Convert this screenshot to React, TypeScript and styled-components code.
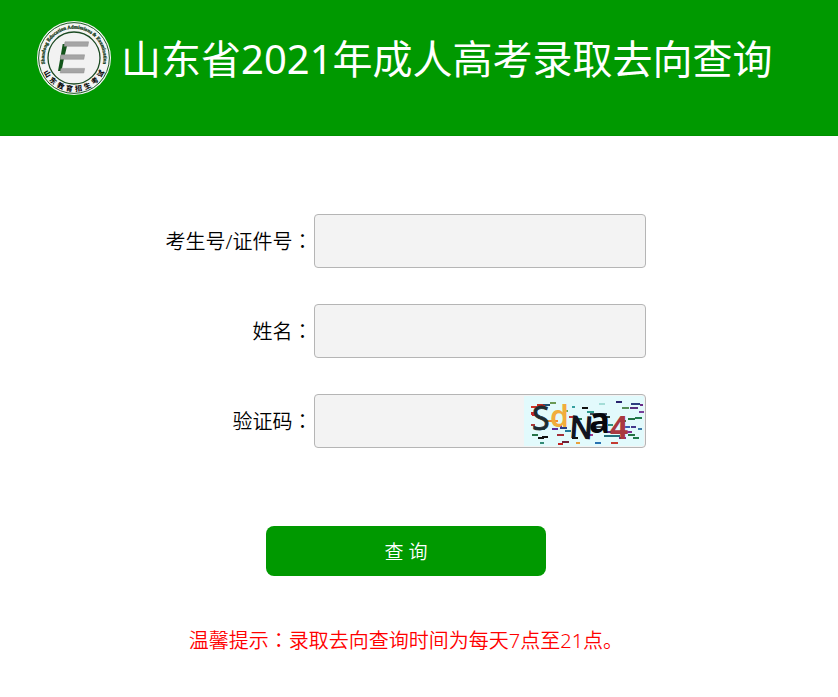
import React from "react";
import styled, { createGlobalStyle } from "styled-components";

const GREEN = "#009900";

const GlobalStyle = createGlobalStyle`
  * { box-sizing: border-box; }
  body {
    margin: 0;
    background: #fff;
    color: #000;
    font-family: "Noto Sans", "Noto Sans CJK SC", sans-serif;
    font-size: 20px;
    font-weight: 350;
  }
`;

const Header = styled.header`
  display: flex;
  align-items: flex-start;
  gap: 9px;
  height: 136px;
  padding: 20px 36px;
  background: ${GREEN};
  border-bottom: 1px solid #009000;
`;

const Logo = styled.svg`
  flex: none;
  width: 76px;
  height: 76px;
`;

const Title = styled.h1`
  margin: 0;
  color: #fff;
  font-size: 40px;
  font-weight: 400;
  line-height: 78px;
  white-space: nowrap;
`;

const Main = styled.main`
  padding: 78px 26px 40px 0;
`;

const Form = styled.form`
  display: flex;
  flex-direction: column;
  align-items: center;
`;

const Fields = styled.div`
  display: grid;
  grid-template-columns: max-content 332px;
  column-gap: 2px;
  row-gap: 36px;
  align-items: center;
`;

const Label = styled.label`
  text-align: right;
  line-height: 48px;
`;

const Colon = styled.span`
  font-family: "Noto Sans CJK TC", sans-serif;
`;

const FieldBox = styled.div`
  display: flex;
  align-items: center;
  height: 54px;
  padding: 1px;
  overflow: hidden;
  background: #f3f3f3;
  border: 1px solid #b5b5b5;
  border-radius: 4px;
`;

const Input = styled.input`
  flex: 1;
  min-width: 0;
  height: 100%;
  padding: 0 10px;
  border: 0;
  outline: 0;
  background: transparent;
  font: inherit;
`;

const CaptchaImage = styled.svg`
  flex: none;
  width: 120px;
  height: 50px;
`;

const Submit = styled.button`
  width: 280px;
  height: 50px;
  margin-top: 78px;
  padding: 0;
  border: 0;
  border-radius: 8px;
  background: ${GREEN};
  color: #fff;
  font: inherit;
  font-size: 19px;
  cursor: pointer;
`;

const Notice = styled.p`
  margin: 48px 0 0;
  color: #f00;
  line-height: 32px;
  text-align: center;
`;

function Emblem() {
  return (
    <Logo viewBox="0 0 76 76" role="img" aria-label="山东教育招生考试">
      <defs>
        <path id="ring-top" d="M15.4 57.3 A29.6 29.6 0 1 1 60.6 57.3" />
      </defs>
      <circle cx="38" cy="38" r="37" fill="#f4f4f4" />
      <circle cx="38" cy="38" r="35.4" fill="none" stroke="#1b5a22" strokeWidth="1" />
      <circle cx="38" cy="38" r="26" fill="#f2f2f2" stroke="#1b4a22" strokeWidth="1.3" />
      <text fontFamily="Liberation Serif" fontSize="5" fontWeight="700" fill="#17401c" stroke="#17401c" strokeWidth="0.3">
        <textPath href="#ring-top" startOffset="50%" textAnchor="middle">
          Shandong Education Admissions &amp; Examination
        </textPath>
      </text>
      <g
        fontFamily="Noto Sans CJK SC"
        fontSize="7"
        fontWeight="900"
        fill="#111"
        textAnchor="middle"
      >
        {Array.from("山东教育招生考试").map((ch, i) => (
          <text key={i} x="38" y="71.4" transform={`rotate(${59.5 - i * 17} 38 38)`}>
            {ch}
          </text>
        ))}
      </g>
      <path d="M26.7 24H31.5L28.4 37H28.3L25.5 51H22L24.5 37z" fill="#12551a" />
      <path d="M29 21.8H52.6L51.8 26.3H28.2zM25 34.8H48.6L47.8 39.3H24.2zM25 48.4H48.6L47.8 53H24.2z" fill="#a5a5a5" stroke="#8c8c8c" strokeWidth="0.5" />
    </Logo>
  );
}

const dashes: [number, number, number, string][] = [
  [26, 8, 6, "#6a9a55"], [13, 10, 7, "#c22d20"], [19, 10, 7, "#214f70"],
  [7, 12, 6, "#d03325"], [92, 7, 6, "#29246e"], [107, 9, 9, "#2d3e80"],
  [98, 13, 7, "#548e58"], [106, 13, 8, "#57307e"], [116, 10, 3, "#6b2a85"],
  [58, 13, 6, "#111"], [39, 16, 5, "#59ac54"], [48, 12, 3, "#36a0a0"],
  [75, 9, 6, "#a4ddd7"], [63, 17, 7, "#2d9a8b"], [115, 17, 5, "#79409b"],
  [7, 19, 6, "#b92d42"], [104, 24, 7, "#247344"], [111, 23, 7, "#207a4b"],
  [94, 26, 8, "#247344"], [78, 22, 8, "#2b3b35"], [50, 24, 8, "#247755"],
  [24, 26, 5, "#7ac68e"], [7, 30, 4, "#a83938"], [16, 34, 5, "#1e7a43"],
  [33, 31, 5, "#72309a"], [36, 33, 7, "#273e88"], [28, 34, 6, "#59309a"],
  [99, 32, 7, "#385cad"], [107, 32, 5, "#45388d"], [100, 37, 8, "#7b318e"],
  [8, 40, 6, "#257448"], [18, 42, 6, "#111"], [14, 43, 6, "#111"],
  [33, 40, 7, "#a42e38"], [41, 36, 6, "#237a9b"], [48, 43, 6, "#111"],
  [61, 40, 8, "#a23a8b"], [82, 37, 8, "#5b2c83"], [80, 41, 16, "#236d7b"],
  [104, 40, 7, "#247344"], [109, 43, 6, "#207a4b"], [95, 43, 7, "#693092"],
  [38, 47, 7, "#6f2138"], [34, 49, 5, "#c02020"], [71, 48, 6, "#2872b1"],
  [87, 48, 7, "#c43b31"], [52, 48, 4, "#eaa03c"], [84, 30, 5, "#309080"],
  [45, 22, 4, "#b33"], [16, 48, 4, "#328c76"], [114, 34, 4, "#3c77a5"],
];

function Captcha() {
  return (
    <CaptchaImage viewBox="0 0 120 50" role="img" aria-label="验证码图片">
      <rect width="120" height="50" fill="#e2fafc" />
      {dashes.map(([x, y, w, color], i) => (
        <rect key={i} x={x} y={y - 2} width={w} height="2" fill={color} />
      ))}
      <path d="M7 17h6M8 19h4M15 10h6" stroke="#c32620" strokeWidth="2" />
      <path d="M66 18h17M68 31h14" stroke="#10131f" strokeWidth="1.5" />
      <path d="M22 25h12" stroke="#f08c32" strokeWidth="2" />
      <g fontFamily="Noto Sans">
        <text x="8" y="34" fontSize="32" fontWeight="400" fill="#1c2c32" stroke="#1c2c32" strokeWidth="0.8">S</text>
        <text x="26" y="31" fontSize="30" fontWeight="600" fill="#f2ad3c">d</text>
        <text x="46" y="42" fontSize="30" fontWeight="400" fill="#10131f" stroke="#10131f" strokeWidth="1.4" transform="rotate(4 58 32)">N</text>
        <text x="65" y="37" fontSize="35" fontWeight="700" fill="#07080d">a</text>
        <text x="86" y="43" fontSize="32" fontWeight="700" fill="#a93840">4</text>
      </g>
    </CaptchaImage>
  );
}

export default function App() {
  return (
    <>
      <GlobalStyle />
      <Header>
        <Emblem />
        <Title>山东省2021年成人高考录取去向查询</Title>
      </Header>
      <Main>
        <Form onSubmit={(e: React.FormEvent) => e.preventDefault()}>
          <Fields>
            <Label htmlFor="candidate">考生号/证件号<Colon>：</Colon></Label>
            <FieldBox><Input id="candidate" type="text" /></FieldBox>
            <Label htmlFor="name">姓名<Colon>：</Colon></Label>
            <FieldBox><Input id="name" type="text" /></FieldBox>
            <Label htmlFor="code">验证码<Colon>：</Colon></Label>
            <FieldBox>
              <Input id="code" type="text" />
              <Captcha />
            </FieldBox>
          </Fields>
          <Submit type="submit">查 询</Submit>
        </Form>
        <Notice>温馨提示<Colon>：</Colon>录取去向查询时间为每天7点至21点。</Notice>
      </Main>
    </>
  );
}
